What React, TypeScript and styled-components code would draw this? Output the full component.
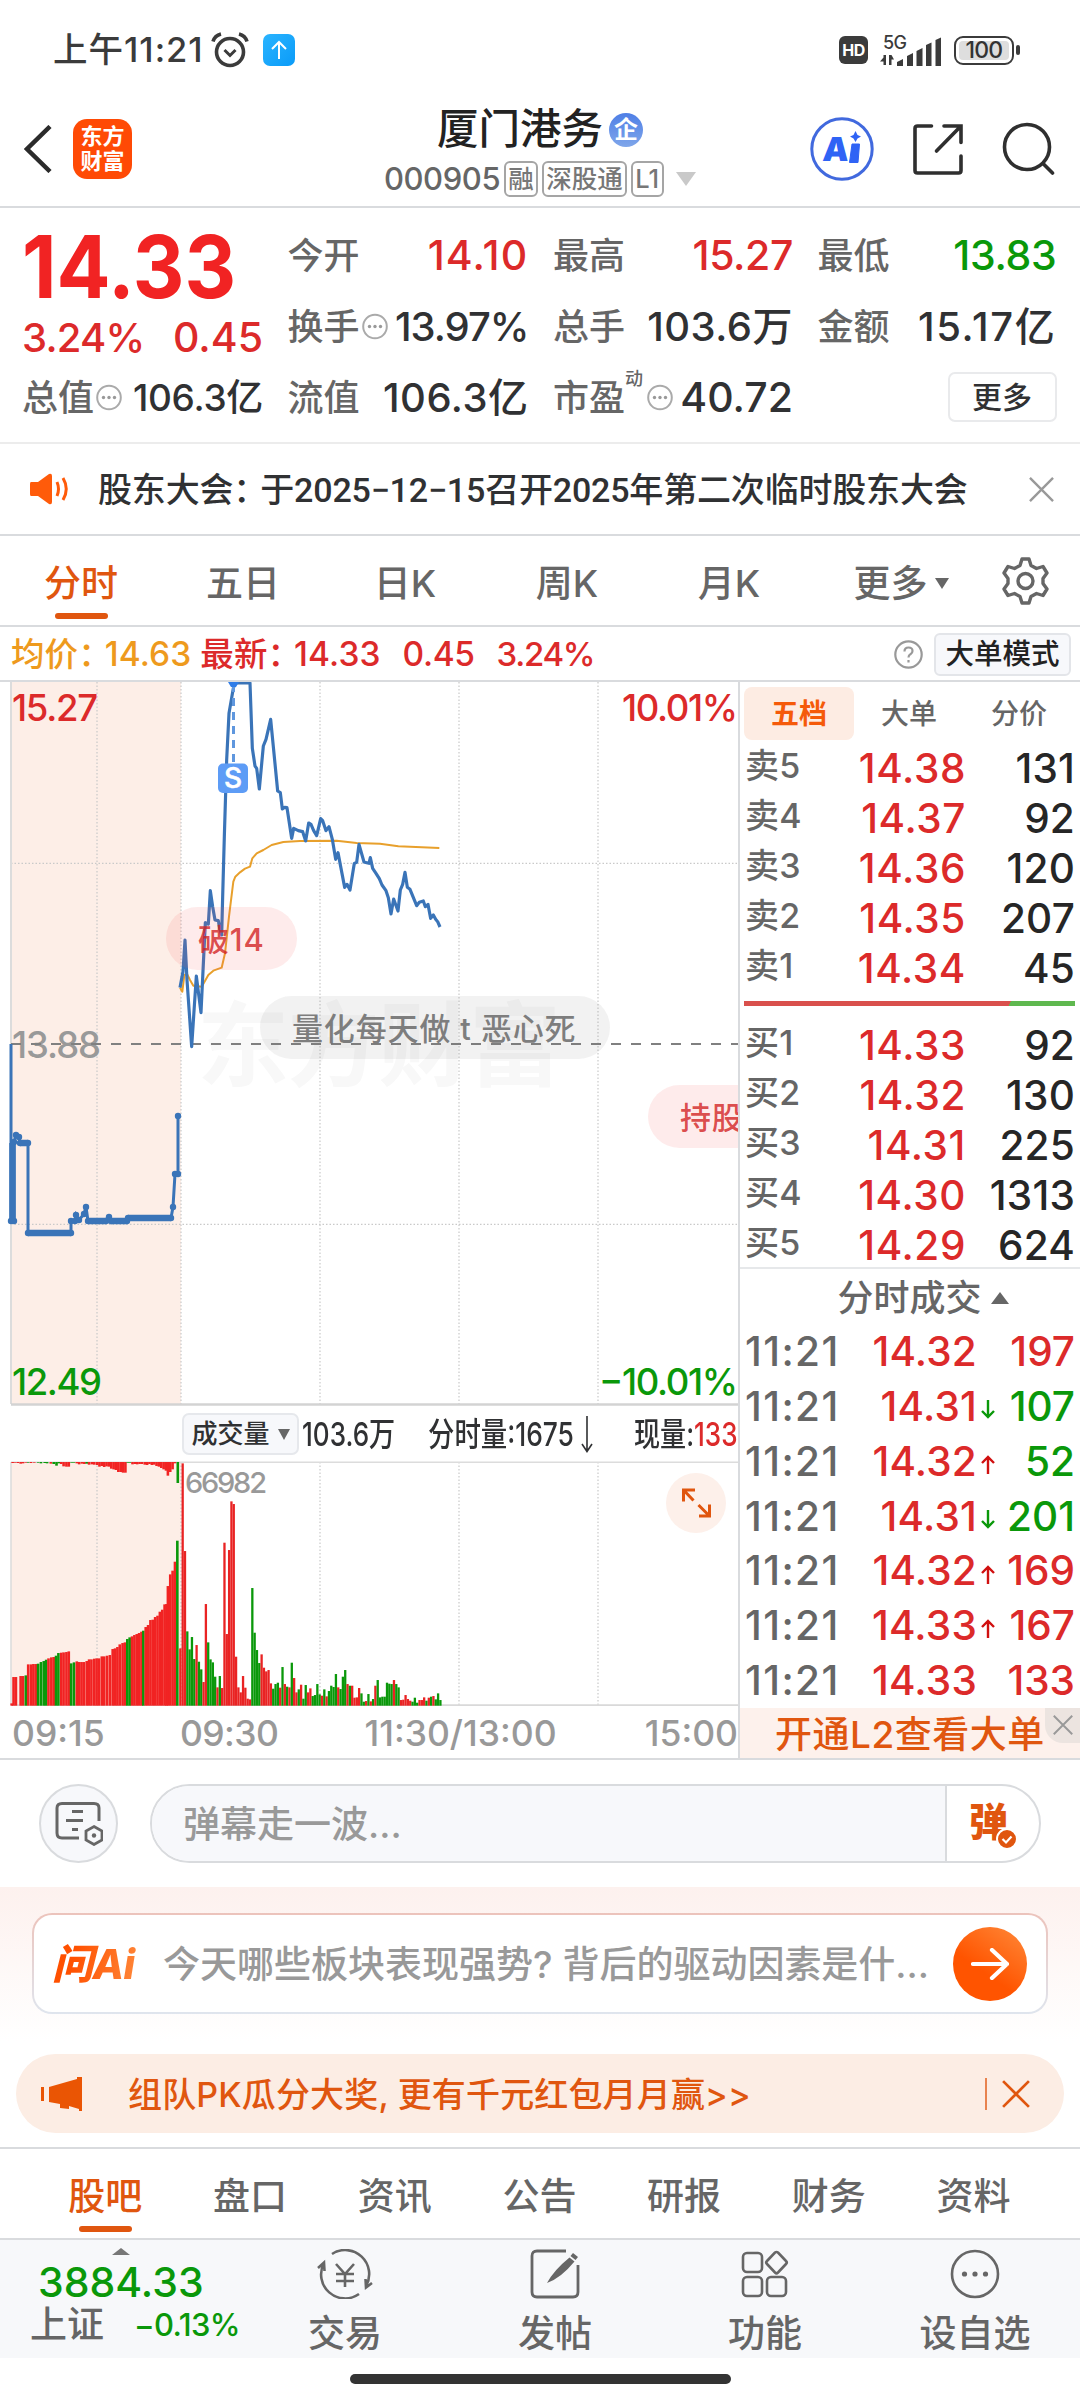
import React from 'react';
import styled, { createGlobalStyle, css } from 'styled-components';

const RED = '#dc2a2a';
const BRIGHT = '#f12323';
const GREEN = '#0a980a';
const INK = '#303133';
const GREY = '#666666';
const MUTED = '#999999';
const ORANGE = '#e0560f';
const LINE = '#d9dbde';
const SHADE = '#fdeee7';
const BLUE = '#3a74b8';

const Global = createGlobalStyle`
  * { box-sizing: border-box; }
  body {
    margin: 0;
    background: #fff;
    font-family: Inter, "Noto Sans CJK SC", sans-serif;
    font-weight: 500;
    line-height: 1;
    color: ${INK};
  }
  svg { display: block; flex: none; }
`;

const Screen = styled.div`
  width: 1080px;
  height: 2400px;
  display: flex;
  flex-direction: column;
  overflow: hidden;
  background: #fff;
`;

/* ---------- text ---------- */
const Txt = styled.span<{ $s?: number; $c?: string; $ls?: number; $w?: number; $sx?: number }>`
  display: inline-block;
  white-space: nowrap;
  line-height: 1;
  font-size: ${p => p.$s ?? 36}px;
  color: ${p => p.$c ?? INK};
  letter-spacing: ${p => p.$ls ?? 0}px;
  font-weight: ${p => p.$w ?? 500};
  ${p => p.$sx && css`transform: scaleX(${p.$sx}); transform-origin: left center;`}
`;
const Colon = styled.span`
  letter-spacing: -7px;
  &::after { content: '：'; }
`;

/* ---------- status bar ---------- */
const StatusBar = styled.div`
  height: 100px;
  flex: none;
  padding: 0 60px 0 53px;
  display: flex;
  align-items: center;
  justify-content: space-between;
`;
const Cluster = styled.div<{ $gap: number }>`
  display: flex;
  align-items: center;
  gap: ${p => p.$gap}px;
`;
const UploadBadge = styled.div`
  width: 32px;
  height: 32px;
  margin-left: 7px;
  border-radius: 7px;
  background: linear-gradient(135deg, #2ab4ff, #0a9bf8);
  display: grid;
  place-items: center;
`;
const StatusIcons = styled.div`
  display: flex;
  align-items: center;
`;
const HdBadge = styled.div`
  width: 29px;
  height: 28px;
  margin-right: 11px;
  border-radius: 6px;
  background: #3b3b3b;
  color: #fff;
  font-size: 16px;
  font-weight: 700;
  letter-spacing: -0.5px;
  display: grid;
  place-items: center;
`;
const Battery = styled.div`
  width: 60px;
  height: 29px;
  margin: 0 2px 0 13px;
  border: 2.5px solid #3b3b3b;
  border-radius: 9px;
  padding: 3px;
  display: flex;
  span {
    flex: 1;
    border-radius: 4px;
    background: #dedede;
    font-size: 23px;
    letter-spacing: -0.8px;
    line-height: 17px;
    color: #333;
    display: grid;
    place-items: center;
  }
`;
const BatteryTip = styled.div`
  width: 4px;
  height: 10px;
  border-radius: 2px;
  background: #3b3b3b;
`;

/* ---------- header ---------- */
const Header = styled.header`
  height: 108px;
  flex: none;
  display: grid;
  grid-template-columns: 270px 1fr 270px;
  border-bottom: 2px solid ${LINE};
`;
const HeadLeft = styled.div`
  display: flex;
  align-items: center;
  gap: 21px;
  padding: 0 0 9px 24px;
`;
const AppLogo = styled.div`
  width: 59px;
  height: 60px;
  border-radius: 14px;
  background: #ff4a05;
  color: #fff;
  font-size: 22px;
  font-weight: 700;
  line-height: 25px;
  display: grid;
  place-content: center;
  text-align: center;
`;
const HeadMid = styled.div`
  display: flex;
  flex-direction: column;
  align-items: center;
  gap: 10px;
  padding-top: 9px;
`;
const CorpBadge = styled.div`
  width: 34px;
  height: 34px;
  border-radius: 50%;
  background: linear-gradient(#4f7fe6, #7fa6ea);
  color: #fff;
  font-size: 24px;
  font-weight: 700;
  display: grid;
  place-items: center;
`;
const Tag = styled.span`
  height: 36px;
  padding: 0 2.5px;
  border: 2px solid #a5a5a5;
  border-radius: 6px;
  font-size: 25.5px;
  line-height: 32px;
  color: #777;
`;
const HeadRight = styled.div`
  display: flex;
  align-items: center;
  justify-content: flex-end;
  gap: 39px;
  padding: 0 25px 9px 0;
`;

/* ---------- quotes ---------- */
const Quotes = styled.section`
  height: 236px;
  flex: none;
  display: grid;
  grid-template-columns: 241px 241px 240px 239px;
  column-gap: 24.5px;
  padding: 12px 22px 0 22px;
  border-bottom: 2px solid #ececec;
`;
const QuoteCol = styled.div`
  display: flex;
  flex-direction: column;
`;
const QuoteRow = styled.div<{ $h?: number }>`
  height: ${p => p.$h ?? 71}px;
  display: flex;
  align-items: center;
  justify-content: space-between;
`;
const Label = styled.div`
  display: flex;
  align-items: center;
  gap: 2px;
  font-size: 36px;
  color: ${GREY};
`;
const Sup = styled.sup`
  align-self: flex-start;
  font-size: 18px;
  margin: -10px 2px 0 -2px;
`;
const MoreButton = styled.div`
  width: 109px;
  height: 50px;
  margin: -2px 0 0 auto;
  border: 2px solid #e9eaec;
  border-radius: 7px;
  font-size: 30px;
  display: grid;
  place-items: center;
`;

/* ---------- notice ---------- */
const Notice = styled.section`
  height: 92px;
  flex: none;
  display: flex;
  align-items: center;
  padding: 0 26px 0 29px;
  border-bottom: 2px solid ${LINE};
`;
const NoticeText = styled.div`
  flex: 1;
  margin: 1px 0 0 28px;
  font-family: Roboto, "Noto Sans CJK SC", sans-serif;
  font-size: 34px;
  letter-spacing: -0.18px;
  white-space: nowrap;
`;

/* ---------- period tabs ---------- */
const PeriodTabs = styled.nav`
  height: 91px;
  flex: none;
  display: grid;
  grid-template-columns: repeat(5, 162px) 182px 1fr;
  border-bottom: 2px solid ${LINE};
`;
const Tab = styled.div<{ $on?: boolean }>`
  display: flex;
  flex-direction: column;
  align-items: center;
  justify-content: flex-end;
  font-size: 37px;
  color: ${p => (p.$on ? ORANGE : GREY)};
  padding-bottom: 6px;
  &::after {
    content: '';
    width: 53px;
    height: 6px;
    margin-top: 11px;
    border-radius: 3px;
    background: ${p => (p.$on ? ORANGE : 'transparent')};
  }
`;
const GearCell = styled.div`
  display: flex;
  align-items: center;
  padding-left: 10px;
`;

const InfoLine = styled.div`
  height: 55px;
  flex: none;
  display: flex;
  align-items: center;
  padding: 2px 9px 0 11px;
  border-bottom: 2px solid ${LINE};
`;
const BigOrderButton = styled.div`
  width: 137px;
  height: 43px;
  margin-left: 11px;
  border: 2px solid #e3e5e9;
  border-radius: 6px;
  background: #f7f8fb;
  color: #222;
  font-size: 28.5px;
  display: grid;
  place-items: center;
`;
const Grow = styled.div`
  flex: 1;
`;

/* ---------- main area ---------- */
const Main = styled.section`
  height: 1078px;
  flex: none;
  display: grid;
  grid-template-columns: 738px 342px;
  border-bottom: 2px solid ${LINE};
`;
const ChartCol = styled.div`
  display: flex;
  flex-direction: column;
  min-width: 0;
`;
const PriceArea = styled.div`
  position: relative;
  height: 724px;
  overflow: hidden;
`;
const Bullet = styled.div<{ $x: number; $y: number; $w: number; $red?: boolean }>`
  position: absolute;
  left: ${p => p.$x}px;
  top: ${p => p.$y}px;
  width: ${p => p.$w}px;
  height: 63px;
  border-radius: 32px;
  padding: 0 32px;
  white-space: nowrap;
  font-size: 31px;
  letter-spacing: 0.85px;
  line-height: 66px;
  color: ${p => (p.$red ? 'rgba(210,35,35,.8)' : 'rgba(105,105,105,.85)')};
  background: ${p => (p.$red ? 'rgba(245,90,90,.12)' : 'rgba(110,110,110,.09)')};
`;
const VolumeHead = styled.div`
  height: 55px;
  display: flex;
  align-items: center;
  padding: 1px 0 0 182px;
`;
const IndicatorButton = styled.div`
  width: 117px;
  height: 42px;
  flex: none;
  margin-right: 3px;
  border: 2px solid #e6e8ec;
  border-radius: 7px;
  background: #f7f8fb;
  font-size: 26px;
  display: flex;
  align-items: center;
  justify-content: center;
  gap: 8px;
  white-space: nowrap;
`;
const VolumeCell = styled.div<{ $w: number }>`
  width: ${p => p.$w}px;
  flex: none;
`;
const TimeAxis = styled.div`
  flex: 1;
  display: grid;
  grid-template-columns: 168px 156px 1fr 130px;
  align-items: center;
  padding: 4px 0 0 12px;
  font-size: 35.5px;
  color: ${MUTED};
  span:nth-child(2) { letter-spacing: -0.6px; }
  span:nth-child(3) { text-align: center; padding-right: 23px; }
  span:nth-child(4) { text-align: right; }
`;

const Side = styled.aside`
  border-left: 2px solid ${LINE};
  display: flex;
  flex-direction: column;
`;
const SideTabs = styled.div`
  height: 62px;
  flex: none;
  display: grid;
  grid-template-columns: 110px 110px 110px;
  padding: 5px 0 4px 4px;
`;
const SideTab = styled.div<{ $on?: boolean }>`
  display: grid;
  place-items: center;
  border-radius: 8px;
  font-size: 28px;
  font-weight: ${p => (p.$on ? 700 : 500)};
  color: ${p => (p.$on ? '#f55a0a' : GREY)};
  background: ${p => (p.$on ? '#fdece3' : 'transparent')};
`;
const BookRow = styled.div`
  height: 50px;
  flex: none;
  display: grid;
  grid-template-columns: 90px 131px 1fr;
  align-items: center;
  padding: 1px 5px 0 5px;
  font-size: 40.5px;
  letter-spacing: 0.2px;
  text-align: right;
  color: #262626;
`;
const Side5 = styled.span`
  text-align: left;
  font-size: 34px;
  padding-bottom: 7px;
  color: ${GREY};
`;
const RatioBar = styled.div`
  height: 5px;
  margin: 7px 5px 15px 4px;
  flex: none;
  background: linear-gradient(120deg, #d9504c 0 80%, #5fb84f 80%);
`;
const DealHead = styled.div`
  height: 57px;
  flex: none;
  margin-top: -4px;
  border-top: 2px solid #e6e8ea;
  display: flex;
  align-items: center;
  justify-content: center;
  gap: 9px;
  padding: 2px 0 0 26px;
  font-size: 36px;
  color: ${GREY};
`;
const DealRow = styled.div`
  height: 54.8px;
  flex: none;
  display: grid;
  grid-template-columns: 100px 132px 20px 1fr;
  align-items: center;
  padding: 2px 5px 0 5px;
  font-size: 40.5px;
  text-align: right;
`;
const DealTime = styled.span`
  text-align: left;
  letter-spacing: 1.4px;
  color: ${GREY};
`;
const DealMark = styled.span`
  padding: 5px 0 0 4px;
`;
const LevelBanner = styled.div`
  position: relative;
  flex: 1;
  background: #fdf1ec;
  color: ${ORANGE};
  font-size: 37px;
  letter-spacing: 0.5px;
  display: flex;
  align-items: center;
  padding: 3px 0 0 35px;
`;
const BannerClose = styled.div`
  position: absolute;
  right: 0;
  top: 0;
  width: 35px;
  height: 35px;
  border-bottom-left-radius: 18px;
  background: #ece4e0;
  display: grid;
  place-items: center;
`;

/* ---------- comment box ---------- */
const CommentRow = styled.section`
  height: 127px;
  flex: none;
  display: flex;
  align-items: center;
  gap: 32px;
  padding: 0 39px;
`;
const RoundButton = styled.div`
  width: 79px;
  height: 79px;
  border-radius: 50%;
  border: 2px solid ${LINE};
  background: #f7f8fb;
  display: grid;
  place-items: center;
`;
const CommentBox = styled.div`
  flex: 1;
  height: 79px;
  display: flex;
  border: 2px solid ${LINE};
  border-radius: 40px;
  overflow: hidden;
`;
const CommentInput = styled.div`
  flex: 1;
  display: flex;
  align-items: center;
  padding: 2px 0 0 31px;
  background: #f7f8fb;
  color: ${MUTED};
  font-size: 37px;
`;
const DanToggle = styled.div`
  position: relative;
  width: 94px;
  border-left: 2px solid ${LINE};
  display: flex;
  align-items: center;
  padding: 0 0 4px 22px;
  color: ${ORANGE};
  font-size: 39px;
  font-weight: 900;
  svg { position: absolute; left: 49px; top: 42px; }
`;

/* ---------- ask AI ---------- */
const AskSection = styled.section`
  height: 167px;
  flex: none;
  padding: 26px 32px 0;
  background: linear-gradient(#fdf1ee, #fff 92%);
`;
const AskCard = styled.div`
  height: 101px;
  border: 2px solid transparent;
  border-radius: 20px;
  background:
    linear-gradient(#fff, #fff) padding-box,
    linear-gradient(#ecc3bb, #dfe5ee) border-box;
  display: flex;
  align-items: center;
  padding: 0 19px 0 18px;
`;
const AskLogo = styled.div`
  width: 111px;
  font-size: 41px;
  font-weight: 800;
  letter-spacing: -0.5px;
  font-style: italic;
  white-space: nowrap;
  color: transparent;
  background: linear-gradient(100deg, #ff5000 20%, #ff8a3c 80%);
  background-clip: text;
  line-height: 48px;
`;
const AskText = styled.div`
  flex: 1;
  padding-top: 1px;
  color: ${MUTED};
  font-size: 37px;
  white-space: nowrap;
`;
const AskGo = styled.div`
  width: 74px;
  height: 74px;
  border-radius: 50%;
  background: linear-gradient(215deg, #ff8a3a, #ff5400 60%);
  display: grid;
  place-items: center;
`;

const Promo = styled.section`
  height: 79px;
  flex: none;
  margin: 0 16px 14px;
  border-radius: 40px;
  background: #fcede4;
  display: flex;
  align-items: center;
  padding: 0 34px 0 25px;
  color: ${ORANGE};
`;
const PromoText = styled.div`
  flex: 1;
  margin: 2px 0 0 46px;
  font-size: 34px;
  letter-spacing: 0.15px;
`;
const Rule = styled.div`
  width: 2px;
  height: 32px;
  margin-right: 15px;
  background: ${ORANGE};
  opacity: 0.7;
`;

const SectionTabs = styled.nav`
  height: 93px;
  flex: none;
  display: grid;
  grid-template-columns: repeat(7, 144.7px);
  padding-left: 33px;
  border-top: 2px solid ${LINE};
  border-bottom: 2px solid ${LINE};
`;

/* ---------- bottom bar ---------- */
const BottomBar = styled.footer`
  height: 118px;
  flex: none;
  display: grid;
  grid-template-columns: 240px repeat(4, 210px);
  background: #f7f8fa;
`;
const IndexCell = styled.div`
  display: flex;
  flex-direction: column;
  padding: 8px 0 0 30px;
`;
const IndexMark = styled.div`
  padding: 0 0 7px 82px;
`;
const IndexValue = styled.div`
  padding-left: 8px;
`;
const IndexRow = styled.div`
  display: flex;
  align-items: center;
  justify-content: space-between;
  margin-top: 3px;
`;
const Action = styled.div`
  display: flex;
  flex-direction: column;
  align-items: center;
  gap: 16px;
  padding-top: 9px;
  font-size: 37px;
  color: ${GREY};
`;
const HomeArea = styled.div`
  flex: 1;
  display: flex;
  justify-content: center;
  padding-top: 16px;
`;
const HomeBar = styled.div`
  width: 381px;
  height: 10px;
  border-radius: 5px;
  background: #333;
`;

/* ---------- small icons ---------- */
const Dots = () => (
  <svg width="26" height="27" viewBox="0 0 26 27" fill="none" stroke="#aaa" strokeWidth="2">
    <circle cx="13" cy="13.5" r="11.8" />
    <g fill="#999" stroke="none">
      <circle cx="7.5" cy="13.5" r="1.7" /><circle cx="13" cy="13.5" r="1.7" /><circle cx="18.5" cy="13.5" r="1.7" />
    </g>
  </svg>
);
const Cross = ({ s, c, w = 2.5 }: { s: number; c: string; w?: number }) => (
  <svg width={s} height={s} viewBox="0 0 26 26" stroke={c} strokeWidth={w} fill="none">
    <path d="M1 1 25 25M25 1 1 25" />
  </svg>
);
const Tri = ({ w, h, c, up }: { w: number; h: number; c: string; up?: boolean }) => (
  <svg width={w} height={h} viewBox="0 0 10 10" preserveAspectRatio="none" fill={c}>
    <path d={up ? 'M5 0 10 10H0Z' : 'M0 0H10L5 10Z'} />
  </svg>
);
const TickArrow = ({ up }: { up: boolean }) => (
  <svg width="14" height="19" viewBox="0 0 14 19" fill="none" stroke={up ? '#d01010' : GREEN} strokeWidth="2.4">
    <path d={up ? 'M7 19V2M1 8 7 2 13 8' : 'M7 0V17M1 11 7 17 13 11'} />
  </svg>
);

/* ---------- chart data (y in thirds of a pixel) ---------- */
const PRICE =
  '540,953 549,905 555,810 561,930 575,1130 589,918 603,1028 616,758 625,762 631,662 638,710 645,750 655,752 659,775 665,795 668,680 673,500 680,270 687,130 700,55 705,39 750,39 757,235 765,288 770,295 778,357 790,228 798,208 812,148 833,363 841,368 847,417 854,412 861,413 875,505 881,475 895,482 908,485 917,513 926,459 933,463 941,482 950,497 962,446 968,452 978,482 987,470 997,508 1007,568 1014,548 1034,652 1041,643 1050,660 1063,580 1070,577 1077,523 1092,576 1100,578 1107,580 1111,563 1118,595 1128,610 1138,626 1146,645 1158,662 1165,683 1173,732 1181,687 1194,723 1201,660 1208,643 1215,607 1222,652 1230,658 1250,707 1258,697 1270,693 1276,710 1284,703 1292,745 1300,735 1307,748 1313,755 1320,771';
const AVERAGE =
  '540,953 547,965 553,915 561,912 570,930 580,947 605,950 612,938 625,915 640,902 665,893 675,850 687,740 700,635 706,620 720,607 735,596 750,590 757,565 770,550 790,540 815,525 850,516 900,513 1010,512 1070,519 1140,521 1195,529 1318,534';
const AUCTION: [number, number][] = [
  [11, 1044], [11, 1221], [14, 1221], [14, 1142], [16, 1135], [19, 1137], [20, 1143], [28, 1143], [28, 1233], [71, 1233],
  [71, 1221], [75, 1221], [76, 1215], [79, 1220], [84, 1214], [86, 1207], [88, 1221], [106, 1221], [109, 1217],
  [111, 1221], [127, 1221], [128, 1218], [171, 1218], [173, 1207], [175, 1174], [178, 1174], [178, 1116],
];
const AUCTION_DOTS = AUCTION.slice(1);

/* bar height in thirds of a pixel, g = falling */
const VOLUME =
  '172 727 464 223g 169g 206g 140g 182 132g 109g 71 305 190g 139g 130g 87g 55 89g 53 489 215 467 613 605 147 55 40 89 54 21 19 353g 219g 167g 128g 154 114 103 107 67 51g 65g 69g 54 116g 65 57g 55 129g 83 40 49g 63 21g 62g 40 52 29g 32g 65g 34g 30 49g 28 44g 60g 56g 95g 55 50g 87g 107g 65 60g 60 24 25 53 37g 12g 14 35g 13 20g 60 77g 25g 27g 27g 69g 66g 65g 77 65g 55g 17 18 32 20 15 12g 24g 9g 17 17 25 15g 24 27g 29 19g 37g 17g'.split(' ');
/* [left edge, height, falling] in chart units of 1/2.119 px */
const AUCTION_VOLUME: [number, number, number?][] = [
  [22, 7], [26, 86], [31, 86], [41, 89], [46, 89], [52, 91, 1], [57, 124], [63, 124], [68, 125], [73, 125], [78, 126, 1], [84, 131, 1],
  [90, 134, 1], [95, 138, 1], [100, 142], [106, 145], [111, 146], [116, 150, 1], [121, 158, 1], [127, 159], [132, 160], [138, 161], [143, 163],
  [148, 127, 1], [154, 130, 1], [160, 133], [165, 131], [170, 131], [175, 131], [181, 134], [186, 139], [191, 139], [197, 141], [202, 142],
  [207, 142], [213, 148], [218, 148], [224, 150], [230, 152], [236, 170], [241, 172], [246, 176], [251, 184], [257, 188], [262, 190],
  [267, 200, 1], [272, 205, 1], [277, 208], [282, 212], [287, 215], [292, 218], [297, 222], [301, 225, 1], [306, 236], [311, 242], [316, 257], [321, 258],
  [326, 266], [331, 270], [336, 282], [341, 288], [346, 304], [350, 305], [353, 359], [358, 394], [363, 405], [368, 432], [373, 495, 1],
];
const UNMATCHED: [number, number, number?][] = [
  [24, 3], [29, 2], [35, 3], [41, 5], [46, 4], [52, 2], [57, 2, 1], [63, 3], [70, 2], [78, 2, 1], [84, 4, 1], [92, 3, 1], [97, 4, 1], [105, 5], [111, 6, 1], [117, 11, 1],
  [122, 4, 1], [127, 6], [132, 13], [138, 14], [143, 14], [149, 2, 1], [154, 2, 1], [160, 4], [165, 7], [171, 5], [176, 6], [181, 5, 1], [186, 8], [192, 7], [197, 8], [203, 9], [208, 14],
  [213, 12], [218, 15], [223, 13], [228, 14], [233, 20], [238, 22], [243, 24], [248, 30], [253, 30], [258, 32], [263, 32], [268, 2, 1], [273, 2, 1], [278, 7], [283, 6],
  [288, 7], [293, 6], [298, 6], [304, 8], [309, 9], [314, 6], [319, 9], [324, 8], [329, 12], [334, 14], [339, 18], [344, 22], [349, 26], [353, 41], [358, 30], [363, 22], [368, 4], [374, 63, 1],
];

const GRID_X = [97, 181, 320, 459, 598];

const PriceChart = () => (
  <svg width="738" height="724" viewBox="0 682 738 724" fontSize="36.5" fontWeight="500">
    <rect x="11" y="682" width="170" height="723" fill={SHADE} />
    <text x="197" y="1079" fontSize="92" fontWeight="700" fill="#f8f8f8" textLength="364">东方财富</text>
    <g stroke="#c9c9c9" strokeWidth="1.2" strokeDasharray="1.5 2">
      {GRID_X.map(x => <path key={x} d={`M${x} 682V1404`} />)}
      <path d="M11 863.3H738M11 1224.3H738" />
    </g>
    <path d="M11 682V1404" stroke="#dcdcdc" strokeWidth="2" />
    <path d="M11 1404.6H738" stroke="#d3d3d3" strokeWidth="2.5" />
    <text x="12" y="1058" fill={MUTED} textLength="89">13.88</text>
    <path d="M11 1044H738" stroke="#808080" strokeWidth="2" strokeDasharray="10 10" />
    <g transform="translate(0 670) scale(.33333)" fill="none" strokeLinejoin="round">
      <polyline points={AVERAGE} stroke="#e8a02c" strokeWidth="6" />
      <polyline points={PRICE} stroke={BLUE} strokeWidth="9.5" />
    </g>
    <polyline points={AUCTION.map(p => p.join()).join(' ')} fill="none" stroke={BLUE} strokeWidth="3" />
    <g fill={BLUE}>
      {AUCTION_DOTS.map(([x, y], i) => <circle key={i} cx={x} cy={y} r="3.2" />)}
    </g>
    <path d="M12.5 1143V1221M20 1143H28M28 1233H71M88 1221H106M111 1221H127M128 1218H171" stroke={BLUE} strokeWidth="6.5" />
    <path d="M233.5 684V762" stroke="#5f97de" strokeWidth="3" strokeDasharray="8 6" />
    <path d="M228 682H239L236 687H231Z" fill="#2f7de8" />
    <rect x="218" y="763.5" width="30" height="29.5" rx="5" fill="#5d9cf6" />
    <text x="233" y="788" fontSize="28" fill="#fff" textAnchor="middle" stroke="#fff" strokeWidth=".5">S</text>
    <text x="12" y="721" fill={RED} textLength="86">15.27</text>
    <text x="738" y="721" fill={RED} textAnchor="end" textLength="116">10.01%</text>
    <text x="12" y="1395" fill={GREEN} textLength="90">12.49</text>
    <text x="738" y="1395" fill={GREEN} textAnchor="end" textLength="139">−10.01%</text>
  </svg>
);

const K = 2.119;
const VolumeChart = () => (
  <svg width="738" height="245" viewBox="0 1461 738 245" fontWeight="500">
    <rect x="11" y="1462" width="170" height="243" fill={SHADE} />
    <g stroke="#c9c9c9" strokeWidth="1.2" strokeDasharray="1.5 2">
      {GRID_X.map(x => <path key={x} d={`M${x} 1462V1705`} />)}
    </g>
    <path d="M11 1462.3H738M11 1462V1705" stroke="#dcdcdc" strokeWidth="1.6" />
    <path d="M11 1705.2H738" stroke="#d9d9d9" strokeWidth="1.8" />
    {AUCTION_VOLUME.map(([x, h, g], i) => (
      <rect key={i} x={x / K} y={1705.7 - h / 3} width="2.6" height={h / 3} fill={g ? '#0a980a' : BRIGHT} />
    ))}
    {UNMATCHED.map(([x, h, g], i) => (
      <rect key={i} x={x / K} y="1462" width="2.6" height={h / 3} fill={g ? '#0a980a' : BRIGHT} />
    ))}
    {VOLUME.map((v, i) => {
      const h = parseInt(v, 10) / 3;
      return <rect key={i} x={179.2 + i * 2.322} y={1705.7 - h} width="2.3" height={h} fill={v.endsWith('g') ? '#0a980a' : '#e92323'} />;
    })}
    <text x="185" y="1493" fontSize="29" fill={MUTED} textLength="82">66982</text>
    <circle cx="696" cy="1503" r="30" fill="#fdf0ea" />
    <path d="M695 1490H683.500V1501.500M683.500 1490 693.500 1500.500M699 1516H709.500V1504.500M709.500 1516 698.500 1505" fill="none" stroke={ORANGE} strokeWidth="3" />
  </svg>
);

const SELL = [['卖5', '14.38', '131'], ['卖4', '14.37', '92'], ['卖3', '14.36', '120'], ['卖2', '14.35', '207'], ['卖1', '14.34', '45']];
const BUY = [['买1', '14.33', '92'], ['买2', '14.32', '130'], ['买3', '14.31', '225'], ['买4', '14.30', '1313'], ['买5', '14.29', '624']];
const DEALS: [string, string, string, string][] = [
  ['14.32', '', '197', RED], ['14.31', 'd', '107', GREEN], ['14.32', 'u', '52', GREEN], ['14.31', 'd', '201', GREEN],
  ['14.32', 'u', '169', RED], ['14.33', 'u', '167', RED], ['14.33', '', '133', RED],
];

const Book = ({ rows }: { rows: string[][] }) => (
  <>
    {rows.map(([n, p, v]) => (
      <BookRow key={n}>
        <Side5>{n}</Side5>
        <Txt $s={40.5} $c={RED} $ls={0.6}>{p}</Txt>
        <span>{v}</span>
      </BookRow>
    ))}
  </>
);

export default function App() {
  return (
    <Screen>
      <Global />
      <StatusBar>
        <Cluster $gap={7}>
          <Txt $s={34.5} $ls={1} $c="#3b3b3b">上午11:21</Txt>
          <svg width="38" height="36" viewBox="0 0 38 36" fill="none" stroke="#3b3b3b" strokeWidth="3.6">
            <circle cx="19" cy="20" r="13.5" />
            <path d="M2 9.500C3 6 6 3 10 2M36 9.500C35 6 32 3 28 2" />
            <path d="M13.500 18 19 23.500 24.500 18" strokeWidth="3" />
          </svg>
          <UploadBadge>
            <svg width="18" height="20" viewBox="0 0 18 20" fill="none" stroke="#fff" strokeWidth="2"><path d="M9 19V2M2 9 9 2 16 9" /></svg>
          </UploadBadge>
        </Cluster>
        <StatusIcons>
          <HdBadge>HD</HdBadge>
          <svg width="62" height="34" viewBox="880 31 62 34" fill="#3b3b3b">
            <text x="884" y="47" fontSize="18" textLength="24">5G</text>
            <path d="M887 53V63H884.500V59.500H881L884.500 55.500V53ZM890 53H892.500L895 57.500H892.500V63H890Z" />
            <path d="M898 60 904 57V64H898ZM908 54 914 51V64H908ZM917.500 49 923.500 46V64H917.500ZM927 43 932.500 40.500V64H927ZM936.500 38 942 35.500V64H936.500Z" />
          </svg>
          <Battery><span>100</span></Battery>
          <BatteryTip />
        </StatusIcons>
      </StatusBar>

      <Header>
        <HeadLeft>
          <svg width="28" height="48" viewBox="0 0 28 48" fill="none" stroke="#2b2b2b" strokeWidth="4.500"><path d="M26 1.500 3 24 26 46.500" /></svg>
          <AppLogo>东方<br />财富</AppLogo>
        </HeadLeft>
        <HeadMid>
          <Cluster $gap={6}>
            <Txt $s={41.5} $c="#222">厦门港务</Txt>
            <CorpBadge>企</CorpBadge>
          </Cluster>
          <Cluster $gap={3.5}>
            <Txt $s={31} $c="#666" $ls={-0.4}>000905</Txt>
            <Tag>融</Tag><Tag>深股通</Tag><Tag>L1</Tag>
            <Cluster $gap={9}><i /><Tri w={20} h={14} c="#c9c9c9" /></Cluster>
          </Cluster>
        </HeadMid>
        <HeadRight>
          <svg width="64" height="64" viewBox="0 0 64 64" fill="none">
            <circle cx="32" cy="32" r="30.200" stroke="#4169de" strokeWidth="3" />
            <text x="12" y="44" fontSize="33" fontWeight="900" fill="#2f63f5" textLength="26" transform="skewX(-4) translate(3 0)">A</text>
            <path d="M42 27H49.500L48 45.500H39.500Z" fill="#2f63f5" stroke="#2f63f5" strokeLinejoin="round" />
            <path d="M45.500 14 47.500 18 51 19.500 47.500 21.500 45.500 25 43.500 21.500 40 19.500 43.500 18Z" fill="#2f63f5" />
          </svg>
          <svg width="50" height="52" viewBox="0 0 50 52" fill="none" stroke="#2f2f2f" strokeWidth="3.600" strokeLinecap="round">
            <path d="M18.500 3H4.500Q2 3 2 5.500V47.500Q2 50 4.500 50H45.500Q48 50 48 47.500V33M31 3H48V19.500M47 4 23.500 28" />
          </svg>
          <svg width="53" height="53" viewBox="0 0 53 53" fill="none" stroke="#2f2f2f" strokeWidth="3.600" strokeLinecap="round">
            <circle cx="25" cy="25" r="22.500" /><path d="M41 41.500 50.500 51" />
          </svg>
        </HeadRight>
      </Header>

      <Quotes>
        <QuoteCol>
          <QuoteRow $h={93}><Txt $s={87} $w={700} $c={BRIGHT} $sx={0.92}>14.33</Txt></QuoteRow>
          <QuoteRow $h={49}><Txt $s={40} $c={RED} $ls={-0.8}>3.24%</Txt><Txt $s={41} $c={RED} $ls={0}>0.45</Txt></QuoteRow>
          <QuoteRow><Label>总值<Dots /></Label><Txt $s={37} $ls={-0.3}>106.3亿</Txt></QuoteRow>
        </QuoteCol>
        <QuoteCol>
          <QuoteRow><Label>今开</Label><Txt $s={41} $c={RED} $ls={1.2}>14.10</Txt></QuoteRow>
          <QuoteRow><Label>换手<Dots /></Label><Txt $s={40} $ls={-1}>13.97%</Txt></QuoteRow>
          <QuoteRow><Label>流值</Label><Txt $s={40} $ls={0.5}>106.3亿</Txt></QuoteRow>
        </QuoteCol>
        <QuoteCol>
          <QuoteRow><Label>最高</Label><Txt $s={41} $c={RED} $ls={-0.4}>15.27</Txt></QuoteRow>
          <QuoteRow><Label>总手</Label><Txt $s={40} $ls={0.5}>103.6万</Txt></QuoteRow>
          <QuoteRow><Label>市盈<Sup>动</Sup><Dots /></Label><Txt $s={41} $ls={0}>40.72</Txt></QuoteRow>
        </QuoteCol>
        <QuoteCol>
          <QuoteRow><Label>最低</Label><Txt $s={41} $c={GREEN} $ls={-0.3}>13.83</Txt></QuoteRow>
          <QuoteRow><Label>金额</Label><Txt $s={40} $ls={1.7}>15.17亿</Txt></QuoteRow>
          <QuoteRow><MoreButton>更多</MoreButton></QuoteRow>
        </QuoteCol>
      </Quotes>

      <Notice>
        <svg width="41" height="32" viewBox="0 0 41 32" fill="none" stroke="#ff5b0a" strokeWidth="3">
          <path d="M2 9H9L20 1Q23 0 23 3V29Q23 32 20 31L9 23H2Q1 23 1 21V11Q1 9 2 9Z" fill="#ff5b0a" stroke="none" />
          <path d="M28 9Q31 16 28 23M34 5Q40.500 16 34 27" />
        </svg>
        <NoticeText>股东大会<Colon />于2025−12−15召开2025年第二次临时股东大会</NoticeText>
        <Cross s={25} c="#999" />
      </Notice>

      <PeriodTabs>
        <Tab $on>分时</Tab><Tab>五日</Tab><Tab>日K</Tab><Tab>周K</Tab><Tab>月K</Tab>
        <Tab><Cluster $gap={7}>更多<Tri w={14} h={11} c="#666" /></Cluster></Tab>
        <GearCell>
          <svg width="47" height="48" viewBox="0 0 47 48" fill="none" stroke="#666" strokeWidth="3.400" strokeLinejoin="round">
            <path d="M20 2H27L29 8.500 34.500 11.500 41 9.500 45 16 41 21.500V26.500L45 32 41 38.500 34.500 36.500 29 39.500 27 46H20L18 39.500 12.500 36.500 6 38.500 2 32 6 26.500V21.500L2 16 6 9.500 12.500 11.500 18 8.500Z" />
            <circle cx="23.500" cy="24" r="7.500" />
          </svg>
        </GearCell>
      </PeriodTabs>

      <InfoLine>
        <Cluster $gap={9}>
          <Txt $s={33.5} $c="#ee9a1d" $ls={0.1}>均价<Colon />14.63</Txt>
          <Cluster $gap={22}>
            <Txt $s={33.5} $c={RED} $ls={0.1}>最新<Colon />14.33</Txt>
            <Txt $s={33.5} $c={RED} $ls={-0.4}>0.45</Txt>
            <Txt $s={33} $c={RED} $ls={-1.3}>3.24%</Txt>
          </Cluster>
        </Cluster>
        <Grow />
        <svg width="29" height="29" viewBox="0 0 29 29" fill="none" stroke="#999" strokeWidth="2.200">
          <circle cx="14.500" cy="14.500" r="13.200" />
          <path d="M10.500 11.500Q10.500 7.500 14.500 7.500 18.500 7.500 18.500 11 18.500 13 16.500 14.200 14.500 15.500 14.500 17.500M14.500 20V22.500" />
        </svg>
        <BigOrderButton>大单模式</BigOrderButton>
      </InfoLine>

      <Main>
        <ChartCol>
          <PriceArea>
            <PriceChart />
            <Bullet $x={166} $y={225} $w={131} $red>破14</Bullet>
            <Bullet $x={260} $y={314} $w={350}>量化每天做 t 恶心死</Bullet>
            <Bullet $x={648} $y={403} $w={200} $red>持股</Bullet>
          </PriceArea>
          <VolumeHead>
            <IndicatorButton>成交量<Tri w={12} h={11} c="#666" /></IndicatorButton>
            <VolumeCell $w={126}><Txt $s={33} $sx={0.79}>103.6万</Txt></VolumeCell>
            <VolumeCell $w={152}><Txt $s={33} $sx={0.8}>分时量:1675</Txt></VolumeCell>
            <VolumeCell $w={54}>
              <svg width="14" height="37" viewBox="0 0 14 37" fill="none" stroke={INK} strokeWidth="1.600"><path d="M7 0V35M2 28 7 35.500 12 28" /></svg>
            </VolumeCell>
            <VolumeCell $w={104}><Txt $s={33} $sx={0.79}>现量:<Txt $s={33} $c={RED}>133</Txt></Txt></VolumeCell>
          </VolumeHead>
          <VolumeChart />
          <TimeAxis><span>09:15</span><span>09:30</span><span>11:30/13:00</span><span>15:00</span></TimeAxis>
        </ChartCol>

        <Side>
          <SideTabs><SideTab $on>五档</SideTab><SideTab>大单</SideTab><SideTab>分价</SideTab></SideTabs>
          <Book rows={SELL} />
          <RatioBar />
          <Book rows={BUY} />
          <DealHead>分时成交<Tri w={18} h={12} c="#666" up /></DealHead>
          {DEALS.map(([p, d, v, c], i) => (
            <DealRow key={i}>
              <DealTime>11:21</DealTime>
              <Txt $s={40.5} $c={RED} $ls={0.2}>{p}</Txt>
              <DealMark>{d && <TickArrow up={d === 'u'} />}</DealMark>
              <Txt $s={40.5} $c={c}>{v}</Txt>
            </DealRow>
          ))}
          <LevelBanner>
            开通L2查看大单
            <BannerClose><Cross s={20} c="#999" /></BannerClose>
          </LevelBanner>
        </Side>
      </Main>

      <CommentRow>
        <RoundButton>
          <svg width="48" height="44" viewBox="0 0 48 44" fill="none" stroke="#666" strokeWidth="3">
            <path d="M24 36H7Q2 36 2 31V6Q2 1.500 7 1.500H39Q44 1.500 44 6V19M17 9.500H28M11 18.500H28M17 27.500H23" />
            <path d="M39 24.500 47 29V38L39 42.500 31 38V29Z" strokeWidth="2.800" />
            <circle cx="39" cy="33.500" r="2.200" fill="#666" stroke="none" />
          </svg>
        </RoundButton>
        <CommentBox>
          <CommentInput>弹幕走一波...</CommentInput>
          <DanToggle>
            弹
            <svg width="22" height="22" viewBox="0 0 22 22">
              <circle cx="11" cy="11" r="10" fill={ORANGE} stroke="#fff" strokeWidth="2" />
              <path d="M6.500 11 10 14.500 15.500 8.500" fill="none" stroke="#fff" strokeWidth="2.200" />
            </svg>
          </DanToggle>
        </CommentBox>
      </CommentRow>

      <AskSection>
        <AskCard>
          <AskLogo>问Ai</AskLogo>
          <AskText>今天哪些板块表现强势? 背后的驱动因素是什...</AskText>
          <AskGo>
            <svg width="38" height="32" viewBox="0 0 38 32" fill="none" stroke="#fff" strokeWidth="4.200" strokeLinecap="round" strokeLinejoin="round">
              <path d="M2 16H36M21 2 36 16 21 30" />
            </svg>
          </AskGo>
        </AskCard>
      </AskSection>

      <Promo>
        <svg width="41" height="34" viewBox="0 0 41 34" fill="#ea5504">
          <path d="M0 10H3V24H0ZM8 10 36 2V0H41V34H38V32L28 29V32L19 31V27L8 25Z" />
        </svg>
        <PromoText>组队PK瓜分大奖, 更有千元红包月月赢&gt;&gt;</PromoText>
        <Rule />
        <Cross s={28} c={ORANGE} />
      </Promo>

      <SectionTabs>
        <Tab $on>股吧</Tab><Tab>盘口</Tab><Tab>资讯</Tab><Tab>公告</Tab><Tab>研报</Tab><Tab>财务</Tab><Tab>资料</Tab>
      </SectionTabs>

      <BottomBar>
        <IndexCell>
          <IndexMark><Tri w={18} h={7} c="#777" up /></IndexMark>
          <IndexValue><Txt $s={41} $c={GREEN} $ls={0}>3884.33</Txt></IndexValue>
          <IndexRow><Txt $s={37} $c={GREY}>上证</Txt><Txt $s={31} $c={GREEN} $ls={-0.6}>−0.13%</Txt></IndexRow>
        </IndexCell>
        <Action>
          <svg width="58" height="50" viewBox="0 0 58 50" fill="none" stroke="#666" strokeWidth="2.600">
            <path d="M16 5A24 24 0 0 1 50 37M43 45A24 24 0 0 1 8 14M2 19 8 13.500 8.500 22M56 34 50 38.500 49.500 30M20 15 29 25 38 15M29 25V38M20 25H38M20 32H38" />
          </svg>
          交易
        </Action>
        <Action>
          <svg width="50" height="50" viewBox="0 0 50 50" fill="none" stroke="#666" strokeWidth="2.800">
            <path d="M36 2H7Q2 2 2 7V43Q2 48 7 48H43Q48 48 48 43V16" />
            <path d="M43 4 48 8 45.500 11 40.500 7ZM39.500 8.500 44.500 12.500Q31 29 17 34 24 21 39.500 8.500Z" fill="#666" stroke="none" />
          </svg>
          发帖
        </Action>
        <Action>
          <svg width="50" height="50" viewBox="0 0 50 50" fill="none" stroke="#666" strokeWidth="2.600">
            <rect x="3" y="4" width="19" height="19" rx="4" /><rect x="3" y="28" width="19" height="19" rx="4" />
            <rect x="27" y="28" width="19" height="19" rx="4" />
            <path d="M35 3.500Q36.500 2.500 38 3.500L46 12Q47.500 13.500 46 15L38 23.500Q36.500 25 35 23.500L27 15Q25.500 13.500 27 12Z" />
          </svg>
          功能
        </Action>
        <Action>
          <svg width="50" height="50" viewBox="0 0 50 50" fill="none" stroke="#666" strokeWidth="2.600">
            <circle cx="25" cy="25" r="23" />
            <g fill="#666" stroke="none"><circle cx="14.500" cy="25" r="2.600" /><circle cx="25" cy="25" r="2.600" /><circle cx="35.500" cy="25" r="2.600" /></g>
          </svg>
          设自选
        </Action>
      </BottomBar>
      <HomeArea><HomeBar /></HomeArea>
    </Screen>
  );
}
